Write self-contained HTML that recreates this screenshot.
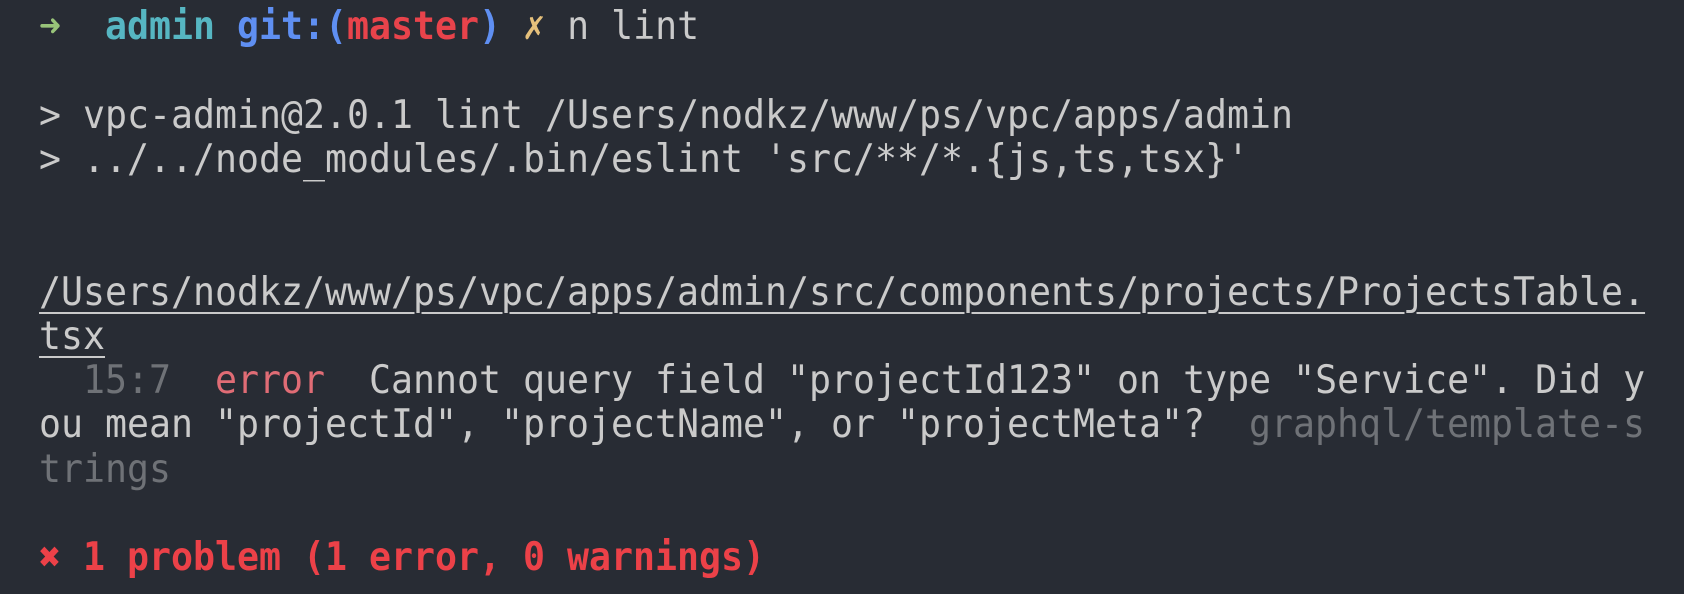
<!DOCTYPE html>
<html><head><meta charset="utf-8"><style>
html,body{margin:0;padding:0;background:#282c34;width:1684px;height:594px;overflow:hidden}
pre{position:absolute;left:39px;top:5px;margin:0;padding:0;font-family:"DejaVu Sans Mono","Liberation Mono",monospace;font-size:39px;line-height:44.25px;letter-spacing:0;color:#cacaca;white-space:pre;transform:scaleX(0.937);transform-origin:0 0}
.g{color:#98c379;font-weight:bold}.c{color:#56b6c2;font-weight:bold}.b{color:#5f8ff2;font-weight:bold}
.r{color:#e8434b;font-weight:bold}.y{color:#e5c07b}.m{color:#6f7277}.e{color:#e06c75}
.u{text-decoration:underline;text-decoration-thickness:2px;text-underline-offset:7px}
.p{color:#ec4148;font-weight:bold}
</style></head><body><pre><span class="g">➜</span>  <span class="c">admin</span> <span class="b">git:(</span><span class="r">master</span><span class="b">)</span> <span class="y">✗</span> n lint

&gt; vpc-admin@2.0.1 lint /Users/nodkz/www/ps/vpc/apps/admin
&gt; ../../node_modules/.bin/eslint 'src/**/*.{js,ts,tsx}'


<span class="u">/Users/nodkz/www/ps/vpc/apps/admin/src/components/projects/ProjectsTable.</span>
<span class="u">tsx</span>
  <span class="m">15:7</span>  <span class="e">error</span>  Cannot query field "projectId123" on type "Service". Did y
ou mean "projectId", "projectName", or "projectMeta"?  <span class="m">graphql/template-s</span>
<span class="m">trings</span>

<span class="p">✖ 1 problem (1 error, 0 warnings)</span></pre></body></html>
